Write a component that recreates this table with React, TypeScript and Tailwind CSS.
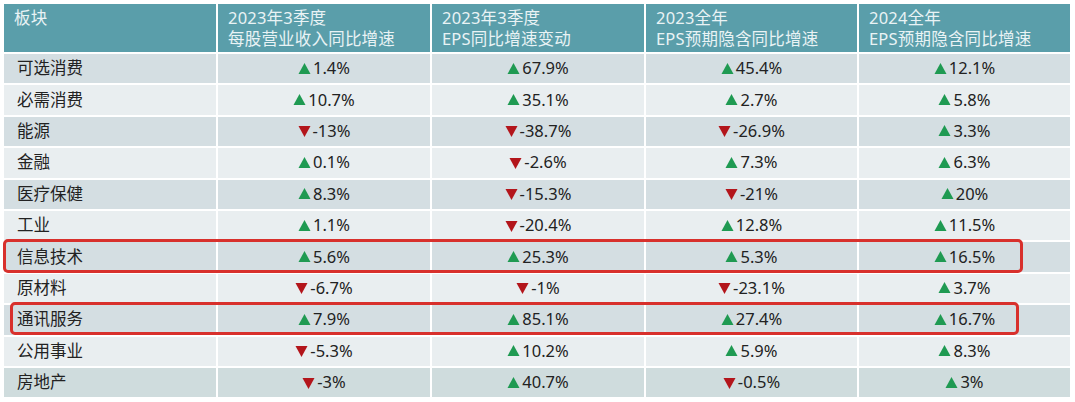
const headers = [
  ["板块"],
  ["2023年3季度", "每股营业收入同比增速"],
  ["2023年3季度", "EPS同比增速变动"],
  ["2023全年", "EPS预期隐含同比增速"],
  ["2024全年", "EPS预期隐含同比增速"],
];

const rows: [string, string[]][] = [
  ["可选消费", ["1.4%", "67.9%", "45.4%", "12.1%"]],
  ["必需消费", ["10.7%", "35.1%", "2.7%", "5.8%"]],
  ["能源", ["-13%", "-38.7%", "-26.9%", "3.3%"]],
  ["金融", ["0.1%", "-2.6%", "7.3%", "6.3%"]],
  ["医疗保健", ["8.3%", "-15.3%", "-21%", "20%"]],
  ["工业", ["1.1%", "-20.4%", "12.8%", "11.5%"]],
  ["信息技术", ["5.6%", "25.3%", "5.3%", "16.5%"]],
  ["原材料", ["-6.7%", "-1%", "-23.1%", "3.7%"]],
  ["通讯服务", ["7.9%", "85.1%", "27.4%", "16.7%"]],
  ["公用事业", ["-5.3%", "10.2%", "5.9%", "8.3%"]],
  ["房地产", ["-3%", "40.7%", "-0.5%", "3%"]],
];

const Arrow = ({ down }: { down: boolean }) => (
  <svg width="13" height="12" viewBox="0 0 13 12" className="mr-[2px] shrink-0">
    {down ? (
      <polygon points="0.5,1 12.5,1 6.5,12" fill="#b3151b" />
    ) : (
      <polygon points="6.5,0 12.5,11 0.5,11" fill="#1f9a52" />
    )}
  </svg>
);

export default function App() {
  return (
    <div
      className="relative w-[1075px] h-[402px] bg-white pl-[4px] pt-[4px] text-[#222]"
      style={{ fontFamily: '"Noto Sans", "Noto Sans CJK SC", sans-serif' }}
    >
      <div className="grid w-[1066px] grid-cols-[212px_212px_212px_211px_211px] grid-rows-[48px_repeat(11,29.4px)] gap-[2px]">
        {headers.map((h, i) => (
          <div
            key={i}
            className="bg-[#5a9eaa] text-[#e9f3f5] text-[16.5px] leading-[21px] pt-[3px] pl-[10px] tracking-[0.2px]"
          >
            {h.map((l) => (
              <div key={l}>{l}</div>
            ))}
          </div>
        ))}
        {rows.map(([name, vals], r) => {
          const bg =
            r === rows.length - 1
              ? "bg-[#cfdcdd]"
              : r % 2 === 0
              ? "bg-[#d4dee2]"
              : "bg-[#e9eef0]";
          return [
            <div key={name} className={`${bg} flex items-center pl-[13px] text-[16.5px]`}>
              {name}
            </div>,
            ...vals.map((v, c) => (
              <div key={name + c} className={`${bg} flex items-center justify-center text-[16.5px]`}>
                <Arrow down={v.startsWith("-")} />
                <span>{v}</span>
              </div>
            )),
          ];
        })}
      </div>

      {/* highlight boxes */}
      <div className="absolute left-[3px] top-[239px] w-[1020px] h-[34px] rounded-[5px] border-[3px] border-[#d8302c]" />
      <div className="absolute left-[10px] top-[302px] w-[1009px] h-[33px] rounded-[5px] border-[3px] border-[#d8302c]" />
    </div>
  );
}
